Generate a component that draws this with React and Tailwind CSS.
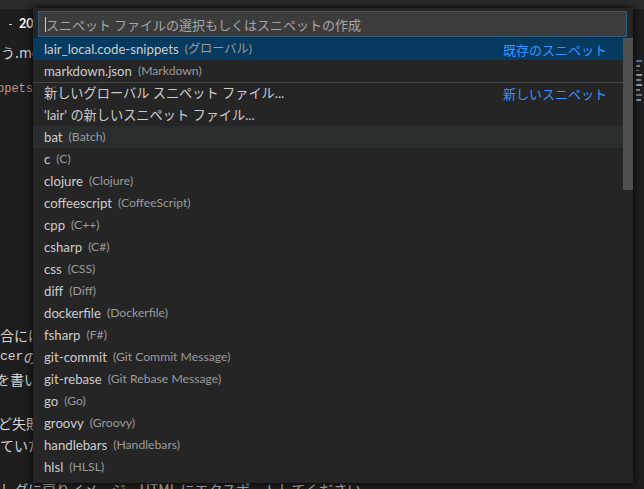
import React from 'react';

const langs = [
  ['bat', 'Batch'],
  ['c', 'C'],
  ['clojure', 'Clojure'],
  ['coffeescript', 'CoffeeScript'],
  ['cpp', 'C++'],
  ['csharp', 'C#'],
  ['css', 'CSS'],
  ['diff', 'Diff'],
  ['dockerfile', 'Dockerfile'],
  ['fsharp', 'F#'],
  ['git-commit', 'Git Commit Message'],
  ['git-rebase', 'Git Rebase Message'],
  ['go', 'Go'],
  ['groovy', 'Groovy'],
  ['handlebars', 'Handlebars'],
  ['hlsl', 'HLSL'],
];

const ui = { fontFamily: 'Lato, "Noto Sans CJK JP", sans-serif' };
const jp = { fontFamily: '"Noto Sans CJK JP", sans-serif' };
const mono = { fontFamily: '"Liberation Mono", "Noto Sans CJK JP", monospace' };

function Row({ label, desc, right, selected, hover, separator }) {
  return (
    <div
      className={`flex items-center h-[22px] pl-[11px] pr-[16px] pt-[1px] whitespace-nowrap ${
        selected ? 'bg-[#063b5f]' : hover ? 'bg-[#2a2d2e]' : ''
      } ${separator ? 'border-t border-[#464647]' : ''}`}
    >
      <span className="text-[13.2px] text-[#cccccc]">{label}</span>
      {desc && <span className="ml-[6px] text-[12.2px] text-[#9b9b9b]">{desc}</span>}
      {right && <span className="ml-auto text-[13px] text-[#3794ff]" style={jp}>{right}</span>}
    </div>
  );
}

function Editor() {
  return (
    <div className="flex flex-col text-[#d4d4d4] whitespace-nowrap" style={jp}>
      <div className="h-[9px] bg-[#2b2b2b]" />
      <div className="h-[30px] flex items-center">
        <span className="w-[3px] h-[1px] bg-[#cccccc] ml-[9px] mr-[7px]" />
        <span className="text-[12.5px] font-bold text-white" style={ui}>2019</span>
      </div>
      <div className="h-[26px] flex items-center text-[14px] text-[#cccccc] pl-[1px]">う.md</div>
      <div className="h-[13px]" />
      <div className="h-[22px] flex items-center text-[12px] text-[#ce9178] -ml-[3px]" style={mono}>
        ppets
      </div>
      <div className="h-[224px]" />
      <div className="h-[22px] flex items-center text-[14px]">合には、</div>
      <div className="h-[22px] flex items-center text-[14px]">
        <span className="text-[13px]" style={mono}>cer</span>の
      </div>
      <div className="h-[22px] flex items-center text-[14px] -ml-[4px]">を書い</div>
      <div className="h-[22px]" />
      <div className="h-[22px] flex items-center text-[14px] -ml-[2px]">ど失敗</div>
      <div className="h-[22px] flex items-center text-[14px]">ていた</div>
      <div className="h-[22px]" />
      <div className="h-[22px] flex items-center text-[14px] text-[#bbbbbb]">
        しダに戻りイメージ・HTML にエクスポートしてください
      </div>
    </div>
  );
}

function Minimap() {
  return (
    <div className="absolute left-[636px] top-[60px] flex flex-col gap-[3px]">
      <div className="w-[6px] h-[2px] bg-[#4a7fb5]" />
      <div className="w-[4px] h-[2px] bg-[#888888]" />
      <div className="w-[3px] h-[1px] bg-[#777777]" />
      <div className="w-[6px] h-[2px] bg-[#999999]" />
      <div className="w-[5px] h-[2px] bg-[#888888]" />
      <div className="w-[6px] h-[2px] bg-[#7aa0c8]" />
      <div className="w-[4px] h-[2px] bg-[#888888]" />
      <div className="w-[6px] h-[2px] bg-[#777777]" />
      <div className="w-[5px] h-[2px] bg-[#7aa0c8]" />
    </div>
  );
}

export default function App() {
  return (
    <div className="relative w-[644px] h-[489px] overflow-hidden bg-[#1e1e1e]" style={ui}>
      <Editor />
      <Minimap />
      <div className="absolute left-[33px] top-[8px] w-[600px] h-[475px] bg-[#252526] shadow-[0_0_8px_#000000] flex flex-col">
        <div className="px-[5px] pt-[3px] pb-[1px]">
          <div className="h-[26px] w-[589px] bg-[#3c3c3c] border border-[#2e5a7c] flex items-center pl-[6px] pt-[1px]">
            <span className="w-[1px] h-[15px] bg-[#cccccc]" />
            <span className="text-[13px] text-[#a6a6a6]" style={jp}>
              スニペット ファイルの選択もしくはスニペットの作成
            </span>
          </div>
        </div>
        <div className="flex flex-1 overflow-hidden">
          <div className="flex-1 flex flex-col">
            <Row label="lair_local.code-snippets" desc="(グローバル)" right="既存のスニペット" selected />
            <Row label="markdown.json" desc="(Markdown)" />
            <Row label="新しいグローバル スニペット ファイル..." right="新しいスニペット" separator />
            <Row label="'lair' の新しいスニペット ファイル..." />
            {langs.map(([l, d], i) => (
              <Row key={l} label={l} desc={`(${d})`} hover={i === 0} />
            ))}
          </div>
          <div className="w-[10px] flex flex-col">
            <div className="h-[152px] bg-[#4f4f4f]" />
          </div>
        </div>
      </div>
    </div>
  );
}
